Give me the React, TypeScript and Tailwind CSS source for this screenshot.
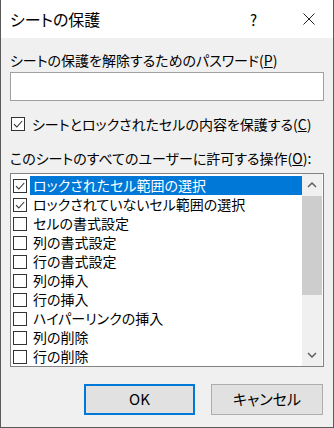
import React from "react";

const items = [
  { label: "ロックされたセル範囲の選択", checked: true, selected: true },
  { label: "ロックされていないセル範囲の選択", checked: true },
  { label: "セルの書式設定" },
  { label: "列の書式設定" },
  { label: "行の書式設定" },
  { label: "列の挿入" },
  { label: "行の挿入" },
  { label: "ハイパーリンクの挿入" },
  { label: "列の削除" },
  { label: "行の削除" },
];

const Check: React.FC<{ checked?: boolean }> = ({ checked }) => (
  <div className="w-[14px] h-[14px] shrink-0 border border-[#333333] bg-white flex items-center justify-center">
    {checked && (
      <svg width="12" height="12" viewBox="0 0 12 12">
        <path d="M2 6.2 L4.8 9 L10.2 3" fill="none" stroke="#333333" strokeWidth="1.1" />
      </svg>
    )}
  </div>
);

export default function App() {
  return (
    <div className="w-[334px] h-[428px] flex flex-col bg-[#f0f0f0] border-x border-b border-[#5a5a5a] text-black font-['Noto_Sans_CJK_JP',sans-serif] [font-feature-settings:'palt'] overflow-hidden">
      {/* Title bar */}
      <div className="h-[38px] shrink-0 bg-white flex items-center pl-[9px] pr-[18px]">
        <span className="text-[16px] leading-none">シートの保護</span>
        <span className="ml-auto text-[15px] leading-none mr-[46px]">?</span>
        <svg width="12" height="12" viewBox="0 0 12 12">
          <path d="M0.5 0.5 L11.5 11.5 M11.5 0.5 L0.5 11.5" stroke="#222" strokeWidth="1" />
        </svg>
      </div>

      {/* Body */}
      <div className="flex flex-col px-[9px] text-[14px]">
        <div className="mt-[12px] h-[20px] leading-[20px]">
          シートの保護を解除するためのパスワード(<span className="underline">P</span>)
        </div>
        <div className="mt-[2px] h-[29px] border border-[#a0a0a0] bg-white" />

        <div className="mt-[13px] h-[20px] flex items-center pl-[1px]">
          <Check checked />
          <span className="ml-[7px] leading-[20px]">
            シートとロックされたセルの内容を保護する(<span className="underline">C</span>)
          </span>
        </div>

        <div className="mt-[14px] h-[20px] leading-[20px]">
          このシートのすべてのユーザーに許可する操作(<span className="underline">O</span>):
        </div>

        {/* List box */}
        <div className="mt-[5px] h-[194px] border border-[#828282] bg-white flex overflow-hidden">
          <div className="flex-1 flex flex-col pt-[2px] min-w-0">
            {items.map((it) => (
              <div key={it.label} className="h-[19px] shrink-0 flex items-center pl-[2px]">
                <Check checked={it.checked} />
                <div
                  className={
                    it.selected
                      ? "ml-[3px] flex-1 h-[19px] leading-[19px] pl-[3px] bg-[#0078d7] text-white"
                      : "ml-[3px] flex-1 h-[19px] leading-[19px] pl-[3px]"
                  }
                >
                  {it.label}
                </div>
              </div>
            ))}
          </div>
          {/* Scrollbar */}
          <div className="w-[20px] mr-[1px] shrink-0 bg-[#f0f0f0] flex flex-col">
            <div className="h-[22px] flex items-center justify-center">
              <svg width="10" height="6" viewBox="0 0 10 6">
                <path d="M1 5 L5 1 L9 5" fill="none" stroke="#606060" strokeWidth="1.5" />
              </svg>
            </div>
            <div className="h-[99px] bg-[#cdcdcd]" />
            <div className="flex-1" />
            <div className="h-[22px] flex items-center justify-center">
              <svg width="10" height="6" viewBox="0 0 10 6">
                <path d="M1 1 L5 5 L9 1" fill="none" stroke="#606060" strokeWidth="1.5" />
              </svg>
            </div>
          </div>
        </div>

        {/* Buttons */}
        <div className="mt-[17px] flex justify-end gap-[16px] pr-[1px]">
          <button className="w-[111px] h-[31px] border-2 border-[#0078d7] bg-[#e1e1e1] text-[15px]">
            OK
          </button>
          <button className="w-[112px] h-[31px] border border-[#adadad] bg-[#e1e1e1] text-[15px]">
            キャンセル
          </button>
        </div>
      </div>
    </div>
  );
}
